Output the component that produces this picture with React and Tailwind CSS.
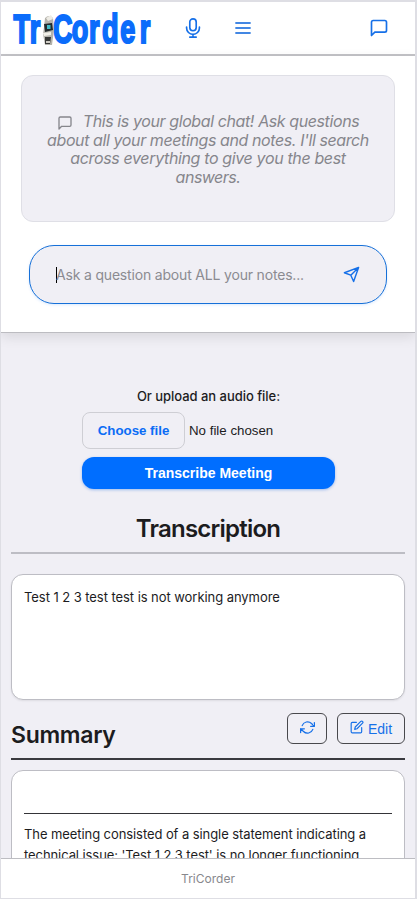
import React from "react";

function ChatIcon({ className, strokeWidth = 2 }) {
  return (
    <svg viewBox="0 0 24 24" fill="none" stroke="currentColor" strokeWidth={strokeWidth} strokeLinecap="round" strokeLinejoin="round" className={className}>
      <path d="M21 15a2 2 0 0 1-2 2H7l-4 4V5a2 2 0 0 1 2-2h14a2 2 0 0 1 2 2z" />
    </svg>
  );
}

function Logo() {
  return (
    <svg viewBox="0 -8 142 52" className="h-[52px] w-[142px] shrink-0 overflow-visible">
      <g transform="scale(.66 1)" fontFamily="'Liberation Sans',sans-serif" fontWeight="700" fontSize="41" fill="#0b6cfb" stroke="#0b6cfb" strokeWidth="2.2">
        <text x="2.2 26.8" y="32.8">Tr</text>
        <text x="62 90.5 116.8 136.5 164 193.4" y="32.8">Corder</text>
      </g>
      <path d="M33 8q4-4 8 0l1 12-2 15h-7l-2-11 1-7z" fill="#b5b3ac" />
      <path d="M34 8l5-3 2 4-5 2z" fill="#eeece5" />
      <path d="M32 14l8-1 1 7-8 2z" fill="#252b2d" />
      <rect x="35" y="15" width="3.5" height="4" fill="#41bcc5" />
      <path d="M31 23l8-1v3l-7 1z" fill="#f2f0e9" />
      <path d="M33 27h6l-1 7h-5z" fill="#383836" />
      <path d="M34 31h4v2h-4z" fill="#cfccc5" />
    </svg>
  );
}

function Header() {
  return (
    <header className="flex h-[54px] shrink-0 items-center border-b-2 border-[#c3c3c7] bg-white pl-[11px] text-[#1670e8]">
      <Logo />
      <svg viewBox="0 0 24 24" fill="none" stroke="currentColor" strokeWidth="1.8" strokeLinecap="round" className="ml-7 h-[22px] w-[22px]">
        <rect x="8.5" y="2" width="7" height="13" rx="3.5" />
        <path d="M5 11v1a7 7 0 0 0 14 0v-1M12 19v3M8.5 22h7" />
      </svg>
      <svg viewBox="0 0 16 12" fill="none" stroke="#4387e3" strokeWidth="1.8" strokeLinecap="round" className="ml-[31px] h-3 w-4">
        <path d="M1 1h14M1 6h14M1 11h14" />
      </svg>
      <ChatIcon className="ml-[118px] h-5 w-5" />
    </header>
  );
}

function ChatPanel() {
  return (
    <section className="flex h-[277px] shrink-0 flex-col border-b border-[#bcbcc1] bg-white pt-[19px] shadow-[0_4px_12px_rgba(0,0,0,0.1)]">
      <div className="ml-5 flex h-[147px] w-[374px] flex-col items-center rounded-xl border border-[#dfdfe6] bg-[#f0eff5] pt-9 text-base leading-[18.3px] italic text-[#86868c]">
        <div className="flex whitespace-nowrap">
          <ChatIcon className="mt-[3px] mr-[10px] h-4 w-4" />
          <span className="tracking-[-0.4px]">This is your global chat! Ask questions</span>
        </div>
        <div className="whitespace-nowrap tracking-[-0.4px]">about all your meetings and notes. I'll search</div>
        <div className="whitespace-nowrap tracking-[-0.36px]">across everything to give you the best</div>
        <div className="whitespace-nowrap tracking-[-0.5px]">answers.</div>
      </div>
      <div className="mt-[23px] ml-7 flex h-[59px] w-[358px] items-center rounded-[25px] border border-[#1670d8] bg-[#f0eff5] pr-[26px] pl-[26px] shadow-[0_1px_3px_rgba(0,112,255,0.15)]">
        <span className="h-4 w-px bg-black" />
        <span className="-ml-px text-sm tracking-[-0.18px] whitespace-nowrap text-[#8b8b91]">Ask a question about ALL your notes...</span>
        <svg viewBox="0 0 24 24" fill="none" stroke="#1670e8" strokeWidth="2" strokeLinejoin="round" className="ml-auto h-[17px] w-[17px]">
          <path d="M22 2 2 9.5l9 3.5 4 9zM22 2 11 13" />
        </svg>
      </div>
    </section>
  );
}

function Upload() {
  return (
    <section className="ml-[81px] flex w-[253px] flex-col pt-[55px]">
      <label className="self-center text-[13px] leading-4 font-medium tracking-[-0.04px] whitespace-nowrap">Or upload an audio file:</label>
      <div className="mt-2 flex items-center gap-1">
        <button className="h-[37px] w-[103px] rounded-lg border border-[#ceced4] font-['Liberation_Sans',sans-serif] text-[13.3px] font-bold text-[#0b6cf5]">Choose file</button>
        <span className="font-['Liberation_Sans',sans-serif] text-[13.3px]">No file chosen</span>
      </div>
      <button className="mt-2 h-8 rounded-xl bg-[#006eff] font-['Liberation_Sans',sans-serif] text-sm font-bold text-white shadow-[0_1px_3px_rgba(0,90,220,0.35)]">Transcribe Meeting</button>
    </section>
  );
}

export default function App() {
  return (
    <div className="flex h-[899px] w-[417px] flex-col overflow-hidden border-t-2 border-r-2 border-b border-l border-[#dedee4] bg-[#f0eff5] font-[Inter,sans-serif] text-[#1c1c1e]">
      <Header />
      <ChatPanel />
      <main className="min-h-0 flex-1 overflow-hidden">
        <Upload />
        <h2 className="mx-2.5 mt-[23px] h-[42px] border-b-2 border-[#bdbdc4] pt-px text-center text-2xl leading-8 font-semibold tracking-[-0.78px]">Transcription</h2>
        <div className="mx-2.5 mt-5 h-[126px] rounded-xl border border-[#bdbdc4] bg-white px-3 pt-[13px] text-[13px] leading-[18px] tracking-[-0.06px] shadow-[0_1px_2px_rgba(0,0,0,0.08)]">Test 1 2 3 test test is not working anymore</div>
        <div className="mx-2.5 mt-[13px] flex h-[47px] border-b-2 border-[#3a3a3f]">
          <h2 className="mt-[6px] text-[23px] leading-8 font-semibold tracking-[-0.3px]">Summary</h2>
          <button className="ml-auto flex h-[31px] w-10 items-center justify-center rounded-md border border-[#48484c]">
            <svg viewBox="0 0 24 24" fill="none" stroke="#1670e8" strokeWidth="2" strokeLinecap="round" strokeLinejoin="round" className="mb-[3px] h-[15px] w-[15px]">
              <path d="M23 4v6h-6M1 20v-6h6M3.51 9a9 9 0 0 1 14.85-3.36L23 10M1 14l4.64 4.36A9 9 0 0 0 20.49 15" />
            </svg>
          </button>
          <button className="ml-2.5 flex h-[31px] w-[68px] items-center justify-center gap-1 rounded-md border border-[#48484c] font-['Liberation_Sans',sans-serif] text-sm text-[#1670e8]">
            <svg viewBox="0 0 24 24" fill="none" stroke="currentColor" strokeWidth="2" strokeLinecap="round" strokeLinejoin="round" className="mb-1 h-[14px] w-[14px]">
              <path d="M11 4H4a2 2 0 0 0-2 2v14a2 2 0 0 0 2 2h14a2 2 0 0 0 2-2v-7M18.5 2.5a2.12 2.12 0 0 1 3 3L12 15l-4 1 1-4z" />
            </svg>
            Edit
          </button>
        </div>
        <div className="mx-2.5 mt-2.5 h-[126px] rounded-xl border border-[#bdbdc4] bg-white px-3 pt-[42px]">
          <div className="border-t border-[#343438] pt-[10px] text-[13px] leading-[21px] tracking-[-0.08px] whitespace-nowrap">
            <p>The meeting consisted of a single statement indicating a</p>
            <p>technical issue: 'Test 1 2 3 test' is no longer functioning</p>
          </div>
        </div>
      </main>
      <footer className="flex h-10 shrink-0 items-center justify-center border-t border-[#bdbdc2] bg-white text-[12px] text-[#88888d]">TriCorder</footer>
    </div>
  );
}
